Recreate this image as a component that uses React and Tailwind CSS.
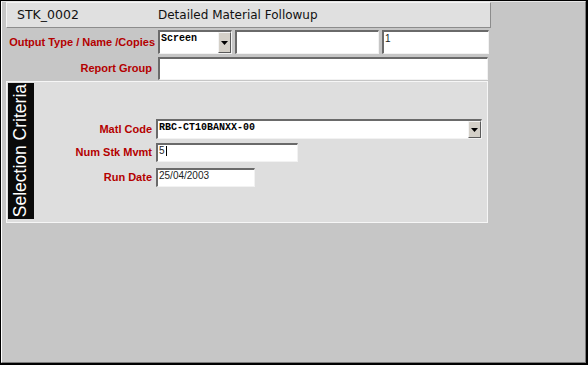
function DropButton() {
  return (
    <div className="flex h-full w-[13px] items-center justify-center border-l border-t border-[#f4f4f4] border-r-[#5a5a5a] border-b-[#5a5a5a] border-r border-b bg-[#d4d0c8]">
      <svg width="7" height="4" viewBox="0 0 7 4">
        <polygon points="0,0 7,0 3.5,4" fill="#000" />
      </svg>
    </div>
  );
}

function Field({ className = "", children }) {
  return (
    <div
      className={`flex items-start overflow-hidden border-l-2 border-t-2 border-r border-b border-l-[#6a6a6a] border-t-[#6a6a6a] border-r-[#f2f2f2] border-b-[#f2f2f2] bg-white ${className}`}
    >
      {children}
    </div>
  );
}

function Label({ children, className = "" }) {
  return (
    <div
      className={`text-right text-[11px] font-bold leading-none text-[#b40000] ${className}`}
      style={{ fontFamily: '"Liberation Sans", Arial, sans-serif' }}
    >
      {children}
    </div>
  );
}

export default function App() {
  const mono = { fontFamily: '"Liberation Mono", "Courier New", monospace' };
  const small = { fontFamily: '"Liberation Sans", Arial, sans-serif' };

  return (
    <div className="h-[365px] w-[588px] border-t border-l border-r-2 border-b-2 border-black bg-black">
      <div className="h-full w-full border-l border-t border-r border-b border-l-white border-t-[#e6e6e6] border-r-[#7a7a7a] border-b-[#7a7a7a] bg-[#c6c6c6] pl-[4px]">
        {/* header */}
        <div
          className="flex h-[26px] w-[485px] items-center border-l border-t border-r border-b border-l-[#f4f4f4] border-t-[#f4f4f4] border-r-[#8c8c8c] border-b-[#8c8c8c] bg-[#e0e0e0] text-[12.5px] text-[#111]"
          style={{ fontFamily: '"DejaVu Sans", Verdana, sans-serif' }}
        >
          <span className="ml-[10px] w-[141px]">STK_0002</span>
          <span className="text-[12px]">Detailed Material Followup</span>
        </div>

        {/* output row */}
        <div className="mt-[2px] flex h-[24px] items-center">
          <Label className="w-[149px]">Output Type / Name /Copies</Label>
          <Field className="ml-[3px] h-[24px] w-[74px]">
            <span className="mt-[2px] ml-[1px] flex-1 text-[10px] font-bold leading-none text-black" style={mono}>
              Screen
            </span>
            <div className="h-full">
              <DropButton />
            </div>
          </Field>
          <Field className="ml-[3px] h-[24px] w-[144px]" />
          <Field className="ml-[3px] h-[24px] w-[107px]">
            <span className="mt-[2px] ml-[1px] text-[10px] leading-none text-[#222]" style={small}>
              1
            </span>
          </Field>
        </div>

        {/* report group */}
        <div className="mt-[3px] flex h-[23px] items-center">
          <Label className="w-[146px]">Report Group</Label>
          <Field className="ml-[6px] h-[23px] w-[330px]" />
        </div>

        {/* selection criteria panel */}
        <div className="mt-[1px] flex h-[142px] w-[482px] border border-[#f6f6f6] bg-[#dedede] p-[1px]">
          <div className="flex h-[136px] w-[26px] items-center justify-center bg-[#0a0a0a]">
            <span
              className="rotate-180 text-[17.5px] leading-none whitespace-nowrap text-white [writing-mode:vertical-rl]"
              style={small}
            >
              Selection Criteria
            </span>
          </div>
          <div className="flex flex-col pt-[36px]">
            <div className="flex h-[20px] items-center">
              <Label className="w-[118px]">Matl Code</Label>
              <Field className="ml-[4px] h-[20px] w-[326px]">
                <span className="mt-[2px] ml-[1px] flex-1 text-[10px] font-bold leading-none text-black" style={mono}>
                  RBC-CT10BANXX-00
                </span>
                <div className="h-full">
                  <DropButton />
                </div>
              </Field>
            </div>
            <div className="mt-[4px] flex h-[19px] items-center">
              <Label className="w-[118px]">Num Stk Mvmt</Label>
              <Field className="ml-[4px] h-[19px] w-[142px]">
                <span className="mt-[1px] ml-[1px] border-r border-black pr-[1px] text-[10px] leading-none text-[#222]" style={small}>
                  5
                </span>
              </Field>
            </div>
            <div className="mt-[6px] flex h-[19px] items-center">
              <Label className="w-[118px]">Run Date</Label>
              <Field className="ml-[4px] h-[19px] w-[99px]">
                <span className="mt-[1px] ml-[1px] text-[10px] leading-none text-[#222]" style={small}>
                  25/04/2003
                </span>
              </Field>
            </div>
          </div>
        </div>
      </div>
    </div>
  );
}
